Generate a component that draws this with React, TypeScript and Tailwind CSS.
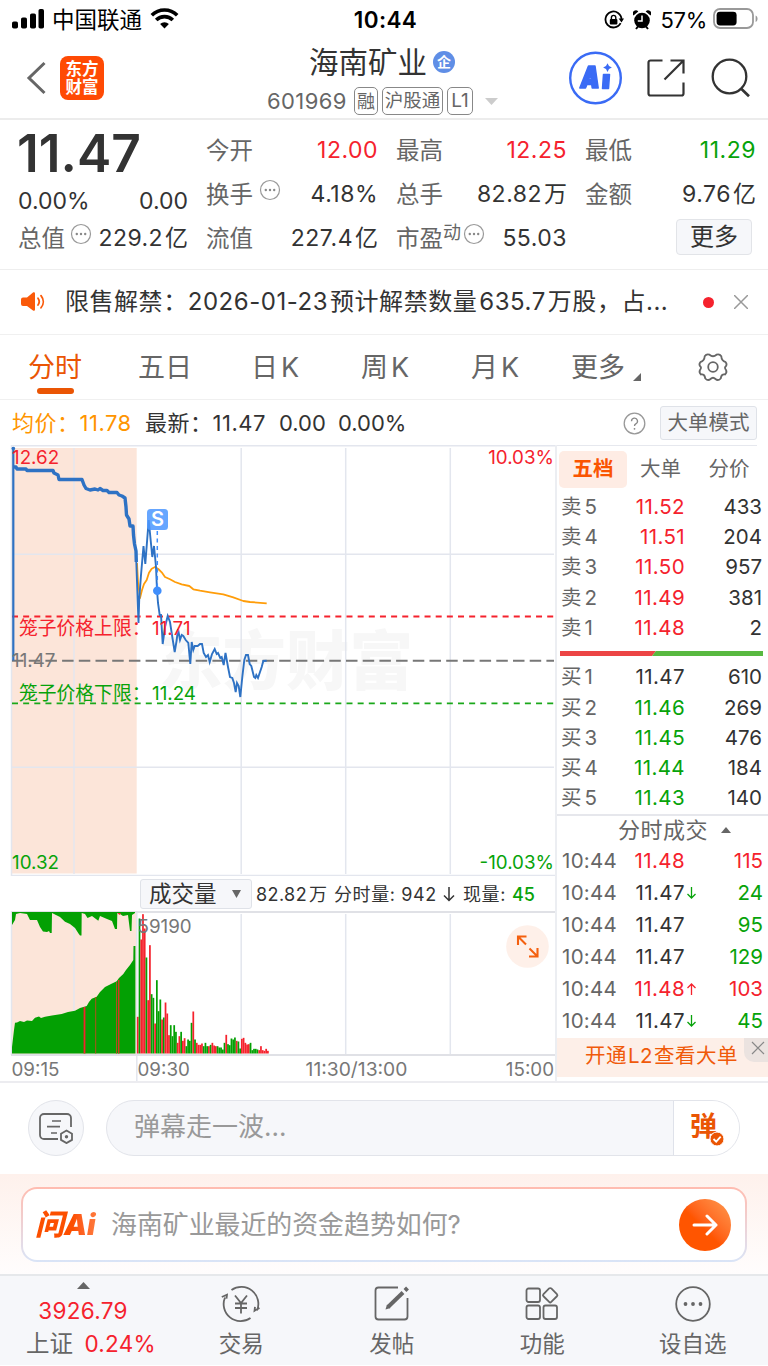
import React from "react";

interface QuoteCell {
  label: string;
  value: string;
  unit?: string;
  color?: string;
  sup?: string;
  dots?: boolean;
}

interface OrderRow {
  label: string;
  price: string;
  qty: string;
  color: string;
}

interface TradeRow {
  price: string;
  color: string;
  arrow?: "up" | "down";
  qty: string;
  qtyColor: string;
}

const RED = "text-[#f5222d]";
const GREEN = "text-[#07a30a]";
const DARK = "text-[#333333]";

const quoteCols: QuoteCell[][] = [
  [
    { label: "今开", value: "12.00", color: RED },
    { label: "换手", value: "4.18%", dots: true },
    { label: "流值", value: "227.4", unit: "亿" },
  ],
  [
    { label: "最高", value: "12.25", color: RED },
    { label: "总手", value: "82.82", unit: "万" },
    { label: "市盈", value: "55.03", sup: "动", dots: true },
  ],
];

const sells: OrderRow[] = [
  { label: "卖5", price: "11.52", qty: "433", color: RED },
  { label: "卖4", price: "11.51", qty: "204", color: RED },
  { label: "卖3", price: "11.50", qty: "957", color: RED },
  { label: "卖2", price: "11.49", qty: "381", color: RED },
  { label: "卖1", price: "11.48", qty: "2", color: RED },
];

const buys: OrderRow[] = [
  { label: "买1", price: "11.47", qty: "610", color: DARK },
  { label: "买2", price: "11.46", qty: "269", color: GREEN },
  { label: "买3", price: "11.45", qty: "476", color: GREEN },
  { label: "买4", price: "11.44", qty: "184", color: GREEN },
  { label: "买5", price: "11.43", qty: "140", color: GREEN },
];

const trades: TradeRow[] = [
  { price: "11.48", color: RED, qty: "115", qtyColor: RED },
  { price: "11.47", color: DARK, arrow: "down", qty: "24", qtyColor: GREEN },
  { price: "11.47", color: DARK, qty: "95", qtyColor: GREEN },
  { price: "11.47", color: DARK, qty: "129", qtyColor: GREEN },
  { price: "11.48", color: RED, arrow: "up", qty: "103", qtyColor: RED },
  { price: "11.47", color: DARK, arrow: "down", qty: "45", qtyColor: GREEN },
];

// 集合竞价
const auctionLine =
  "13.3,467 16,467 17,469 26,469 27,470.5 53,470.5 54,473 58,475 59,479.5 82,479.5 84,485 86,488.5 90,490 95,489 98,490 100,488.5 103,490.5 107,490.5 109,492.5 117,492.5 119,495 122,496 125,498 126,507 126.5,515 129,519 130,526 133,526 133.5,535 134.5,544 136,551 136.3,562";

const priceLine =
  "136.3,562 138.5,623 139.2,600 141,575 143.5,546 145.3,564 148.7,520 152.3,557 154,546 156,567 157,590 158,603 159.7,615 161,615 162.7,644 165,627 167.7,616 170,622 172.3,637 174.7,652 176.7,640 178,629 180,640 181.7,635 183.3,636 185.7,640 188.3,643 190.3,664 191.7,642 193.3,650 194.7,646 197.7,646 200,644 202,644 203.7,653 206,657 208,655 209.7,662 212,654 214.7,649 216.7,654 218,653 220.3,658 221.7,657 223.7,665 225.5,653 228,667 230,677 232.3,678 234,683 235.7,692 237,683 238.7,686 240.3,697 242.3,677 244.3,660 246,655 248,655 249.7,664 251.3,666 254,677 255.3,678 256.3,675 258,678 260,672 261.7,667 263.3,661 266.7,660.7";

const avgLine =
  "137,563 138,582 140,598 142,590 144,584 146.7,580 149,572.7 151.7,568.7 155,567 158.3,569 161.7,572.3 165,577 170,579.3 175,582 181.7,584.3 189.3,586 193.3,589.3 200,590.7 210,592.3 223.3,594.3 233.3,597.3 243.3,601 250,602 266.7,603.3";

const auctionVolume =
  "12,1053.5 12,1047 14,1030 15,1022.7 17,1022.5 20,1021 24,1022 27,1020.5 32,1021 35,1017.7 39,1016.5 41,1018 45,1016.7 52,1015.5 61.7,1014 68,1012 75,1010.7 80,1008 86.7,1006 89,1002 91.7,998.7 96.7,996.7 100,992 105,987 111,984 116.7,981.3 119,978 123.3,974 126,970 130,965 133.3,960 133.5,946 135.4,946 135.4,1053.5";

const auctionUnmatched =
  "12,912 12,925 15,920 16,914 20,913 27,914 30,920 37,920 40,927 43,931.5 47,932 49,931 50,933 51.7,933 52,913 54,914 60,917 65,921.7 70,924 75,928 78.5,933.5 80,935.5 81.5,935.5 81.7,913 85,914 87.5,918 92,916 98.3,920.7 100,916 107,919 112,921 115,929 117,929 117.3,913 120,914 123,916 128,915 130,931 131.5,931 132,915 135,913 135,912";

// 每分钟成交量: 正数为红, 负数为绿
const volumes = [
  110, -405, 342, 418, 375, -288, 160, 325, -178, -167, 90, -220, -127, -162, 102, -108, 153, 120, 55, -85,
  -52, -85, -65, 32, 52, -65, 38, 46, -22, -42, -38, -92, 126, -42, 32, 26, 26, 30, -22, -32,
  -22, 22, -26, 32, 24, 22, -22, -18, -18, -12, -32, 56, -28, -25, -45, -42, -48, 38, -36, -15,
  44, 47, 32, 27, 28, -32, -10, -14, -14, -12, 10, 22, 10, 8, 14, 8,
];

const MoreDots: React.FC<{ className?: string }> = ({ className = "" }) => (
  <svg className={className} width="22" height="22" viewBox="0 0 22 22" fill="none">
    <circle cx="11" cy="11" r="9.5" stroke="#999" strokeWidth="1.2" />
    <circle cx="6.8" cy="11" r="1.2" fill="#888" />
    <circle cx="11" cy="11" r="1.2" fill="#888" />
    <circle cx="15.2" cy="11" r="1.2" fill="#888" />
  </svg>
);

const StatusBar: React.FC = () => (
  <div className="flex h-10 items-center text-black">
    <div className="flex flex-1 items-center pl-3">
      <svg className="-mt-[2px]" width="32" height="20" viewBox="0 0 32 20">
        <rect x="0" y="12.5" width="6" height="7" rx="1.8" />
        <rect x="9" y="8.5" width="6" height="11" rx="1.8" />
        <rect x="18" y="4.5" width="6" height="15" rx="1.8" />
        <rect x="26.5" y="0" width="5.5" height="19.5" rx="1.8" />
      </svg>
      <span className="ml-2 text-[22.5px] leading-10">中国联通</span>
      <svg className="-mt-[3px] ml-2" width="29" height="21" viewBox="0 0 29 21">
        <path
          d="M1.8 7.2a18 18 0 0 1 25.4 0M6.2 12a11.8 11.8 0 0 1 16.6 0"
          fill="none"
          stroke="#000"
          strokeWidth="3.6"
        />
        <path d="M14.500 20.5l-4.400-4.600a6.400 6.400 0 0 1 8.800 0z" />
      </svg>
    </div>
    <span className="text-[22.5px] font-semibold tracking-[0.4px]">10:44</span>
    <div className="flex flex-1 items-center justify-end pr-[9px]">
      <svg width="20" height="20" viewBox="0 0 20 20" fill="none">
        <path d="M16.6 13.2A8 8 0 1 1 17.5 9.5" stroke="#000" strokeWidth="1.8" />
        <path d="M14.6 8.4h5.4l-2.5 4z" fill="#000" />
        <rect x="5.8" y="9" width="7.6" height="5.6" rx="1" fill="#000" />
        <path d="M7.4 9.4V7.6a2.2 2.2 0 0 1 4.4 0v1.8" stroke="#000" strokeWidth="1.4" />
      </svg>
      <svg className="-mt-[1px] ml-[9px]" width="18" height="20" viewBox="0 0 18 20">
        <circle cx="9" cy="10.5" r="7.8" />
        <path d="M.5 5.5a3 3 0 0 1 4.8-4zM17.5 5.5a3 3 0 0 0-4.8-4z" />
        <path d="M3 19l2.4-3M15 19l-2.4-3" stroke="#000" strokeWidth="2" />
        <path d="M9 5.6v5.4H4.8" fill="none" stroke="#fff" strokeWidth="1.5" />
      </svg>
      <span className="ml-[9px] text-[22px] leading-10 tracking-[-0.3px]">57%</span>
      <svg className="-mt-[2px] ml-[6px]" width="46" height="22" viewBox="0 0 46 22">
        <rect x="1" y="1" width="39" height="19" rx="6" fill="none" stroke="#999" strokeWidth="1.8" />
        <rect x="3.6" y="3.8" width="20" height="13.6" rx="3.4" />
        <path d="M42.6 7.4c2.6 1 2.6 5.6 0 6.6z" fill="#999" />
      </svg>
    </div>
  </div>
);

const Header: React.FC = () => (
  <div className="flex h-20 border-b-2 border-[#ececec]">
    <div className="flex w-[267px] items-center pb-[3px] pl-[26px]">
      <svg width="20" height="34" viewBox="0 0 20 34" fill="none">
        <path d="M18.5 2L3 17l15.5 15" stroke="#666" strokeWidth="3" />
      </svg>
      <div className="ml-[14px] flex h-11 w-11 flex-col items-center justify-center rounded-[8px] bg-[#ff4a04] text-[16.5px] font-bold leading-[18px] text-white">
        <span>东方</span>
        <span>财富</span>
      </div>
    </div>
    <div className="flex w-[231px] flex-col">
      <div className="flex h-[44px] items-center pl-[42px]">
        <span className="text-[29.5px] leading-[44px] text-[#333]">海南矿业</span>
        <span className="ml-[6px] flex h-[22px] w-[22px] items-center justify-center rounded-full bg-[#5f8ee6] text-[14px] font-bold leading-none text-white">
          企
        </span>
      </div>
      <div className="flex h-[34px] items-center text-[#666]">
        <span className="w-[87px] text-[22px] tracking-[0.4px]">601969</span>
        <span className="flex h-7 w-[24px] items-center justify-center rounded-[5px] border border-[#888] text-[18px]">融</span>
        <span className="ml-1 flex h-7 w-[61px] items-center justify-center rounded-[5px] border border-[#888] text-[18.5px]">沪股通</span>
        <span className="ml-1 flex h-7 w-[26px] items-center justify-center rounded-[5px] border border-[#888] text-[19px]">L1</span>
        <svg className="ml-3" width="13" height="7" viewBox="0 0 13 7">
          <path d="M0 0h13L6.500 7z" fill="#ccc" />
        </svg>
      </div>
    </div>
    <div className="flex flex-1 items-center pb-[2px] pl-[71px]">
      <svg width="53" height="54" viewBox="0 0 53 54">
        <circle cx="26.5" cy="27" r="25.3" fill="none" stroke="#3a6bf5" strokeWidth="2.4" />
        <path
          d="M19.5 15h6.500l3.200 22h-6l-.5-3.500h-4.800l-1.400 3.500h-5.700zM19.6 28.500h2.600l-.6-5z"
          fill="#3a6bf5"
          fillRule="evenodd"
          stroke="#3a6bf5"
          strokeWidth="1.5"
          strokeLinejoin="round"
        />
        <path d="M34.500 23.500h6l-1 14h-6z" fill="#3a6bf5" stroke="#3a6bf5" strokeWidth="1.5" strokeLinejoin="round" />
        <path d="M38.500 12.200l1.500 2.900 2.900 1.500-2.900 1.500-1.500 2.900-1.500-2.900-2.900-1.500 2.900-1.500z" fill="#3a6bf5" />
      </svg>
      <svg className="ml-[25px]" width="38" height="38" viewBox="0 0 38 38" fill="none" stroke="#333" strokeWidth="2.2">
        <path d="M15.5 1.500H3.500a2 2 0 0 0-2 2v31a2 2 0 0 0 2 2h31a2 2 0 0 0 2-2V23.500" />
        <path d="M23.5 1.500h13v13M36 2L17.500 20.500" />
      </svg>
      <svg className="ml-[26px]" width="40" height="40" viewBox="0 0 40 40" fill="none" stroke="#333" strokeWidth="2.3">
        <circle cx="18.5" cy="18.5" r="16.8" />
        <path d="M30.5 31l7.500 7.200" strokeWidth="2.7" />
      </svg>
    </div>
  </div>
);

const QuotePanel: React.FC = () => (
  <div className="flex h-[150px] border-b border-[#eeeeee] pt-2 pl-[18px] text-[23px] text-[#333]">
    <div className="flex w-[170px] flex-col">
      <span className="-ml-[1px] h-[50px] text-[51.5px] font-semibold leading-[50px] text-[#333]">11.47</span>
      <div className="flex h-[46px] items-center justify-between">
        <span>0.00%</span>
        <span>0.00</span>
      </div>
      <div className="flex h-[29px] items-center">
        <span className="text-[23.5px] text-[#666]">总值</span>
        <MoreDots className="mt-[-9px] ml-[5px]" />
        <span className="ml-auto tracking-[0.4px]">229.2</span>
        <span className="ml-[2px]">亿</span>
      </div>
    </div>
    {quoteCols.map((col, i) => (
      <div key={i} className={i === 0 ? "ml-[18px] w-[172px]" : "ml-[18px] w-[171px]"}>
        {col.map((cell) => (
          <div key={cell.label} className="flex h-[44.3px] items-center">
            <span className="text-[23.5px] text-[#666]">{cell.label}</span>
            {cell.sup && <span className="mt-[-13px] text-[18px] text-[#666]">{cell.sup}</span>}
            {cell.dots && <MoreDots className={cell.sup ? "mt-[-9px] ml-[2px]" : "mt-[-9px] ml-[6px]"} />}
            <span className={`ml-auto tracking-[0.5px] ${cell.color ?? ""}`}>{cell.value}</span>
            {cell.unit && <span className="ml-[2px]">{cell.unit}</span>}
          </div>
        ))}
      </div>
    ))}
    <div className="ml-[18px] w-[171px]">
      <div className="flex h-[44.3px] items-center justify-between">
        <span className="text-[23.5px] text-[#666]">最低</span>
        <span className={`tracking-[0.5px] ${GREEN}`}>11.29</span>
      </div>
      <div className="flex h-[44.3px] items-center">
        <span className="text-[23.5px] text-[#666]">金额</span>
        <span className="ml-auto tracking-[0.5px]">9.76</span>
        <span className="ml-[2px]">亿</span>
      </div>
      <div className="flex h-[40px] items-center justify-end">
        <button className="mr-1 h-9 w-[76px] rounded-[4px] border border-[#e2e4e8] bg-[#f6f7fa] text-[24px] leading-[34px]">
          更多
        </button>
      </div>
    </div>
  </div>
);

const Notice: React.FC = () => (
  <div className="flex h-[65px] items-center border-b border-[#f0f0f0] pr-5 pl-5">
    <svg width="26" height="22" viewBox="0 0 26 22" fill="none">
      <path d="M3 6.500h4L13 1.500c.8-.6 2-.2 2 1v16c0 1.200-1.200 1.600-2 1L7 15H3a2 2 0 0 1-2-2V8.500a2 2 0 0 1 2-2z" fill="#fa5a0a" />
      <path d="M18 7.300c1.500 2 1.500 4.700 0 6.800M21 4.600c3 3.700 3 8.500 0 12.200" stroke="#fa5a0a" strokeWidth="1.8" strokeLinecap="round" />
    </svg>
    <span className="ml-[19px] flex-1 whitespace-nowrap text-[24px] leading-10 tracking-[0.54px] text-[#333]">
      限售解禁：2026-01-23<span className="ml-[2px]">预计解禁数量</span>
      <span className="ml-[2px]">635.7</span>
      <span className="ml-[2px]">万股，占...</span>
    </span>
    <span className="h-[11px] w-[11px] rounded-full bg-[#f5222d]" />
    <svg className="ml-5" width="14" height="14" viewBox="0 0 14 14" stroke="#999" strokeWidth="1.5">
      <path d="M0 0l14 14M14 0L0 14" />
    </svg>
  </div>
);

const PeriodTabs: React.FC = () => (
  <div className="flex h-[65px] border-b border-[#f0f0f0] text-[27px] text-[#666]">
    <div className="flex w-[110px] flex-col items-center text-[#ea5504]">
      <span className="h-[52px] leading-[65px]">分时</span>
      <span className="mt-[1px] h-[6px] w-[37px] rounded-[3px] bg-[#ea5504]" />
    </div>
    <span className="w-[110px] text-center leading-[65px]">五日</span>
    {["日", "周", "月"].map((unit) => (
      <span key={unit} className="flex w-[110px] justify-center gap-[3px] leading-[65px]">
        <span>{unit}</span>
        <span>K</span>
      </span>
    ))}
    <span className="flex w-[110px] pl-[21px] leading-[65px]">
      更多
      <svg className="mt-[38px] ml-[8px]" width="8" height="8" viewBox="0 0 8 8">
        <path d="M8 0v8H0z" fill="#666" />
      </svg>
    </span>
    <svg className="mt-[16px] ml-[37px]" width="32" height="32" viewBox="0 0 32 32" fill="none" stroke="#666" strokeWidth="1.8" strokeLinejoin="round">
      <path d="M12.5 3.700Q16 6.700 19.500 3.700Q22.500 2.500 24.300 5.300Q24.500 9.800 28.700 11.200Q30.300 13.300 28.900 15.200Q27 16.500 29 19Q30.300 21.500 28 23.500Q24.500 22.500 23.700 27.500Q21 30.300 18.500 28Q16 25.500 13.500 28Q11 30.300 8.300 27.500Q7.500 22.500 4 23.500Q1.700 21.500 3 19Q5 16.500 3.100 15.200Q1.700 13.300 3.300 11.200Q7.500 9.800 7.700 5.300Q9.500 2.500 12.500 3.700z" />
      <circle cx="16" cy="16" r="4.8" />
    </svg>
  </div>
);

const AverageBar: React.FC = () => (
  <div className="flex h-[45px] items-center pt-[1px] pr-[11px] pl-3 text-[22px] text-[#333]">
    <span className="w-[133px] whitespace-nowrap tracking-[0.5px] text-[#ff9500]">均价：11.78</span>
    <span className="w-[134px] whitespace-nowrap tracking-[0.5px]">最新：11.47</span>
    <span className="w-[59px]">0.00</span>
    <span>0.00%</span>
    <svg className="ml-auto" width="23" height="23" viewBox="0 0 23 23" fill="none">
      <circle cx="11.5" cy="11.5" r="10.3" stroke="#999" strokeWidth="1.3" />
      <path d="M8.500 9.200a3 3 0 1 1 4.300 2.700c-.9.500-1.300 1-1.300 2.100" stroke="#888" strokeWidth="1.3" />
      <circle cx="11.5" cy="16.8" r="0.9" fill="#888" />
    </svg>
    <button className="ml-[14px] h-[34px] w-[97px] rounded-[3px] border border-[#dfe2e8] bg-[#f6f7fa] text-[20.5px] leading-8 whitespace-nowrap text-[#666]">
      大单模式
    </button>
  </div>
);

const PriceChart: React.FC = () => (
  <svg className="block" width="555" height="431" viewBox="0 445 555 431" fill="none" fontSize="18.8">
    <rect x="12" y="448" width="124.7" height="425.5" fill="#fce5d9" />
    <text x="159" y="684" fontSize="63.5" fontWeight="900" fill="#f7f7f7">
      东方财富
    </text>
    <g stroke="#e3e6ee" strokeWidth="1.5">
      <path d="M11 445.800h544M11.500 445v431M12 554.300h542M12 767.300h542M11 875.500h544" />
      <path d="M74 448v426M241.200 448v426M345.700 448v426M450.300 448v426" />
    </g>
    <path d="M12 616.500h542" stroke="#f5222d" strokeWidth="1.8" strokeDasharray="6 5.15" />
    <path d="M12 660.700h542" stroke="#777" strokeWidth="2" strokeDasharray="11.5 5.2" />
    <path d="M12 703.400h542" stroke="#1aa81a" strokeWidth="1.8" strokeDasharray="6 5.15" />
    <polyline points={avgLine} stroke="#ff9d0a" strokeWidth="1.8" strokeLinejoin="round" />
    <path d="M13.300 447v213.500" stroke="#2e72c4" strokeWidth="2.2" />
    <circle cx="13.3" cy="448.5" r="1.8" fill="#2e72c4" />
    <polyline points={auctionLine} stroke="#2e72c4" strokeWidth="3.4" strokeLinejoin="round" />
    <polyline points={priceLine} stroke="#2e72c4" strokeWidth="1.9" />
    <path d="M157.300 531v56" stroke="#3f8efc" strokeWidth="1.5" strokeDasharray="4 3.5" />
    <circle cx="157.3" cy="590.7" r="4.3" fill="#3f8efc" />
    <rect x="147" y="509" width="21" height="21" rx="3.5" fill="#4b97ff" fillOpacity="0.85" />
    <text x="157.5" y="526.3" fontSize="20" fontWeight="600" fill="#fff" textAnchor="middle">
      S
    </text>
    <text x="12" y="464" fill="#f5222d">12.62</text>
    <text x="554" y="464" fill="#f5222d" textAnchor="end">10.03%</text>
    <text x="19" y="634.5" fill="#f5222d">笼子价格上限：</text>
    <text x="152" y="634.5" fill="#f5222d">11.71</text>
    <text x="12" y="666.5" fill="#777">11.47</text>
    <text x="19" y="699.5" fill="#07a30a">笼子价格下限：</text>
    <text x="152" y="699.5" fill="#07a30a">11.24</text>
    <text x="12" y="869" fill="#07a30a">10.32</text>
    <text x="554" y="869" fill="#07a30a" textAnchor="end">-10.03%</text>
  </svg>
);

const VolumeBar: React.FC = () => (
  <div className="flex h-[35px] items-center pt-[1px] pl-[140px] text-[18px] text-[#333]">
    <button className="flex h-[30px] w-[112px] items-center justify-between rounded-[3px] border border-[#dfe2e8] bg-[#f6f7fa] pr-[10px] pl-2 text-[22.5px] leading-7">
      成交量
      <svg width="9" height="8" viewBox="0 0 9 8">
        <path d="M0 0h9L4.500 8z" fill="#666" />
      </svg>
    </button>
    <span className="ml-1 flex w-[78px] tracking-[0.4px]">
      82.82<span className="ml-[2px]">万</span>
    </span>
    <span className="w-[109px] whitespace-nowrap tracking-[0.6px]">分时量: 942</span>
    <svg className="w-[12px]" width="12" height="15" viewBox="0 0 12 15" fill="none" stroke="#333" strokeWidth="1.5">
      <path d="M6 0v13.500M1 8.500l5 5 5-5" />
    </svg>
    <span className="ml-2 w-[49px] whitespace-nowrap tracking-[0.6px]">现量:</span>
    <span className="font-medium text-[#07a30a]">45</span>
  </div>
);

const VolumeChart: React.FC = () => (
  <svg className="block" width="555" height="170" viewBox="0 911 555 170" fill="none" fontSize="18.8">
    <rect x="12" y="912" width="124.7" height="142" fill="#fce5d9" />
    <g stroke="#e3e6ee" strokeWidth="1.5">
      <path d="M11.500 911v144M74 912v142M136.800 912v169M241.200 914v140M345.700 914v140M450.300 914v140" />
    </g>
    <path d="M11 912h544M11 1055h544" stroke="#e0e1e6" strokeWidth="2" />
    <polygon points={auctionUnmatched} fill="#03a003" />
    <path d="M117.500 913h3.500l-1.500 2z" fill="#f5222d" />
    <polygon points={auctionVolume} fill="#03a003" />
    <path d="M84.500 1007v46.500" stroke="#f5222d" strokeWidth="1.8" />
    <path d="M95.700 997v56.500M116.500 982v71.500" stroke="#b0501c" strokeWidth="1" />
    <path d="M118.700 980v73.500" stroke="#d23a20" strokeWidth="1.5" />
    {volumes.map((v, i) => (
      <rect
        key={i}
        x={136.9 + i * 1.735}
        y={1053.5 - Math.abs(v) / 3}
        width="1.735"
        height={Math.abs(v) / 3}
        fill={v > 0 ? "#f5222d" : "#03a003"}
      />
    ))}
    <text x="137.5" y="932.5" fill="#777">59190</text>
    <circle cx="527.5" cy="946.5" r="21.3" fill="#fef0e9" />
    <path
      d="M518 945v-8.500h8.500M518.500 937l7.500 7.500M537.500 948v8.500h-8.500M537 956l-7.500-7.500"
      stroke="#f4600f"
      strokeWidth="2.1"
    />
    <g fill="#777">
      <text x="11.5" y="1076">09:15</text>
      <text x="137.5" y="1076">09:30</text>
      <text x="356.5" y="1076" fontSize="19.3" textAnchor="middle">11:30/13:00</text>
      <text x="554" y="1076" textAnchor="end">15:00</text>
    </g>
  </svg>
);

const OrderList: React.FC<{ rows: OrderRow[] }> = ({ rows }) => (
  <>
    {rows.map((row) => (
      <div key={row.label} className="flex h-[30.3px] items-center pr-[6px] pl-[4px] text-[20.5px] text-[#333]">
        <span className="w-[43px] whitespace-nowrap text-[#666]">
          {row.label.charAt(0)}
          <span className="ml-[3px]">{row.label.charAt(1)}</span>
        </span>
        <span className={`w-[81px] text-right tracking-[0.4px] ${row.color}`}>{row.price}</span>
        <span className="ml-auto">{row.qty}</span>
      </div>
    ))}
  </>
);

const SidePanel: React.FC = () => (
  <div className="flex w-[213px] flex-col border-l-2 border-[#eceef2]">
    <div className="mr-[11px] border-t border-[#e6e8ee]" />
    <div className="flex h-[46px] items-center pl-[2px] text-[20.5px] text-[#666]">
      <span className="flex h-[37px] w-[68px] items-center justify-center rounded-[5px] bg-[#feece4] font-bold text-[#fa5400]">五档</span>
      <span className="w-[67px] text-center">大单</span>
      <span className="w-[70px] text-center">分价</span>
    </div>
    <OrderList rows={sells} />
    <svg className="mt-[8px] mb-[6px] ml-[3px] shrink-0" width="203" height="5" viewBox="0 0 203 5">
      <path d="M0 0h96l-4 5H0z" fill="#ec4545" />
      <path d="M96 0h107v5H92z" fill="#58b940" />
    </svg>
    <OrderList rows={buys} />
    <div className="flex h-[31px] items-center border-t-2 border-[#e6e7ec] pl-[61px] text-[22px] tracking-[0.5px] text-[#666]">
      分时成交
      <svg className="ml-[13px]" width="10" height="6" viewBox="0 0 10 6">
        <path d="M5 0l5 6H0z" fill="#666" />
      </svg>
    </div>
    {trades.map((t, i) => (
      <div key={i} className="flex h-8 items-center pr-[5px] pl-[5px] text-[20.5px]">
        <span className="w-[56px] tracking-[0.3px] text-[#666]">10:44</span>
        <span className={`w-[67px] text-right tracking-[0.4px] ${t.color}`}>{t.price}</span>
        {t.arrow && (
          <svg
            className={t.arrow === "up" ? "ml-[2px] text-[#f5222d]" : "ml-[2px] rotate-180 text-[#07a30a]"}
            width="9"
            height="12"
            viewBox="0 0 9 12"
            fill="none"
            stroke="currentColor"
            strokeWidth="1.3"
          >
            <path d="M4.500 12V1M.5 5l4-4 4 4" />
          </svg>
        )}
        <span className={`ml-auto ${t.qtyColor}`}>{t.qty}</span>
      </div>
    ))}
    <div className="relative mt-[1px] flex h-[39px] items-center bg-[#fdefe8] pb-[2px] pl-[28px] text-[20.5px] leading-8 tracking-[0.5px] whitespace-nowrap text-[#f05a0a]">
      开通<span className="mx-[1px]">L2</span>查看大单
      <span className="absolute top-0 right-0 flex h-6 w-6 items-center justify-center rounded-bl-[10px] bg-[#ebe3e0]">
        <svg className="-mt-[3px] ml-[3px]" width="14" height="14" viewBox="0 0 14 14" stroke="#888" strokeWidth="1.2">
          <path d="M1 1l12 12M13 1L1 13" />
        </svg>
      </span>
    </div>
  </div>
);

const DanmuBar: React.FC = () => (
  <div className="flex h-[93px] items-center border-t-2 border-[#ececf0] pr-7 pb-[2px] pl-7">
    <span className="flex h-14 w-14 items-center justify-center rounded-full border-[1.5px] border-[#e2e4ea] bg-[#f6f7fa]">
      <svg width="34" height="32" viewBox="0 0 34 32" fill="none" stroke="#666" strokeWidth="1.8">
        <path d="M19 27H5a4 4 0 0 1-4-4V6a4 4 0 0 1 4-4h23a4 4 0 0 1 4 4v9" />
        <path d="M13 9h9M8 14.700h13M12 21h6" strokeWidth="1.7" />
        <path d="M27.500 18.500l5.500 3.200v6.200l-5.500 3.200-5.500-3.200v-6.200z" />
        <circle cx="27.5" cy="24.8" r="1.7" fill="#666" stroke="none" />
      </svg>
    </span>
    <div className="ml-[22px] flex h-14 flex-1 overflow-hidden rounded-full border-[1.5px] border-[#e2e4ea] bg-[#f6f7fa]">
      <span className="flex-1 pl-[27px] text-[26px] leading-[51px] text-[#999]">弹幕走一波...</span>
      <span className="relative flex w-[66px] border-l-[1.5px] border-[#dfe2ea] bg-white pl-[16px] text-[27px] font-bold leading-[52px] text-[#ea5504]">
        弹
        <svg className="absolute top-[30px] left-[35px]" width="16" height="16" viewBox="-1 -1 16 16">
          <circle cx="7" cy="7" r="7" fill="#ea5504" stroke="#fff" />
          <path d="M3.500 7l2.700 2.700 4.500-5" fill="none" stroke="#fff" strokeWidth="1.8" />
        </svg>
      </span>
    </div>
  </div>
);

const AskAi: React.FC = () => (
  <div className="h-[100px] bg-gradient-to-b from-[#fef1ec] to-[#fffdfd] px-[21px] pt-[13px]">
    <div className="h-[75px] rounded-[16px] bg-gradient-to-b from-[#ffbcb0] to-[#d9e4f7] p-[2px]">
      <div className="flex h-full items-center rounded-[14px] bg-white pr-[14px] pl-[12px]">
        <span className="w-[76px] bg-gradient-to-r from-[#fc4f00] from-50% to-[#ff9152] bg-clip-text text-[29px] font-black italic leading-[40px] text-transparent">
          问Ai
        </span>
        <span className="pt-[1px] text-[25.9px] leading-10 text-[#999]">海南矿业最近的资金趋势如何?</span>
        <span className="ml-auto flex h-[52px] w-[52px] items-center justify-center rounded-full bg-gradient-to-tr from-[#ff5500] from-45% to-[#ff9a4d]">
          <svg width="26" height="22" viewBox="0 0 26 22" fill="none" stroke="#fff" strokeWidth="3" strokeLinecap="round" strokeLinejoin="round">
            <path d="M2 11h22M15 2l9 9-9 9" />
          </svg>
        </span>
      </div>
    </div>
  </div>
);

const NavItem: React.FC<{ label: string; children: React.ReactNode }> = ({ label, children }) => (
  <div className="flex flex-1 flex-col items-center pt-[8px]">
    <svg width="40" height="40" viewBox="0 0 40 40" fill="none" stroke="#666" strokeWidth="1.8">
      {children}
    </svg>
    <span className="mt-[1px] text-[22.5px] leading-[38px] text-[#666]">{label}</span>
  </div>
);

const BottomNav: React.FC = () => (
  <div className="flex h-[91px] border-t-2 border-[#e6e8eb] bg-[#f6f7fa]">
    <div className="flex w-[166px] flex-col items-center pt-[6px]">
      <svg width="13" height="7" viewBox="0 0 13 7">
        <path d="M6.500 0L13 7H0z" fill="#666" />
      </svg>
      <span className={`mt-[5px] text-[22.5px] leading-[33px] tracking-[0.3px] ${RED}`}>3926.79</span>
      <span className="ml-[26px] flex w-[130px] justify-between self-start text-[22.5px] leading-[34px] text-[#666]">
        <span className="text-[23.5px]">上证</span> <span className={`tracking-[0.3px] ${RED}`}>0.24%</span>
      </span>
    </div>
    <NavItem label="交易">
      <path d="M10.500 6A17 17 0 0 1 36 26.500M38.500 24l-5 2.800.5-4M29.500 34A17 17 0 0 1 4 13.500M.8 13l5.200-2.300-.5 4" />
      <path d="M14 11.500l6 7.500 6-7.500M14 19.500h12M14 24h12M20 19v10.500" />
    </NavItem>
    <NavItem label="发帖">
      <path d="M26 3.500H6.500a3 3 0 0 0-3 3v26a3 3 0 0 0 3 3h26a3 3 0 0 0 3-3V14" />
      <path d="M33 6.500l2.500-2.500" strokeWidth="4" />
      <path d="M31 8.500L16 23" strokeWidth="4" />
      <path d="M15 20.500l-1.500 5 5-1.500z" fill="#666" stroke="none" />
    </NavItem>
    <NavItem label="功能">
      <rect x="4.5" y="4.5" width="13.5" height="13.5" rx="2" />
      <rect x="4.5" y="21.5" width="13.5" height="13.5" rx="2" />
      <rect x="21.5" y="21.5" width="13.5" height="13.5" rx="2" />
      <rect x="22.7" y="5.7" width="11" height="11" rx="1.5" transform="rotate(45 28.2 11.2)" />
    </NavItem>
    <NavItem label="设自选">
      <circle cx="20" cy="20" r="16.8" />
      <g fill="#666" stroke="none">
        <circle cx="12.5" cy="20" r="1.9" />
        <circle cx="20" cy="20" r="1.9" />
        <circle cx="27.5" cy="20" r="1.9" />
      </g>
    </NavItem>
  </div>
);

const App: React.FC = () => (
  <div className="flex h-[1366px] w-[768px] flex-col overflow-hidden bg-white font-['Inter','Noto_Sans_CJK_SC',sans-serif]">
    <StatusBar />
    <Header />
    <QuotePanel />
    <Notice />
    <PeriodTabs />
    <AverageBar />
    <div className="flex h-[636px]">
      <div className="w-[555px]">
        <PriceChart />
        <VolumeBar />
        <VolumeChart />
      </div>
      <SidePanel />
    </div>
    <DanmuBar />
    <AskAi />
    <BottomNav />
  </div>
);

export default App;
